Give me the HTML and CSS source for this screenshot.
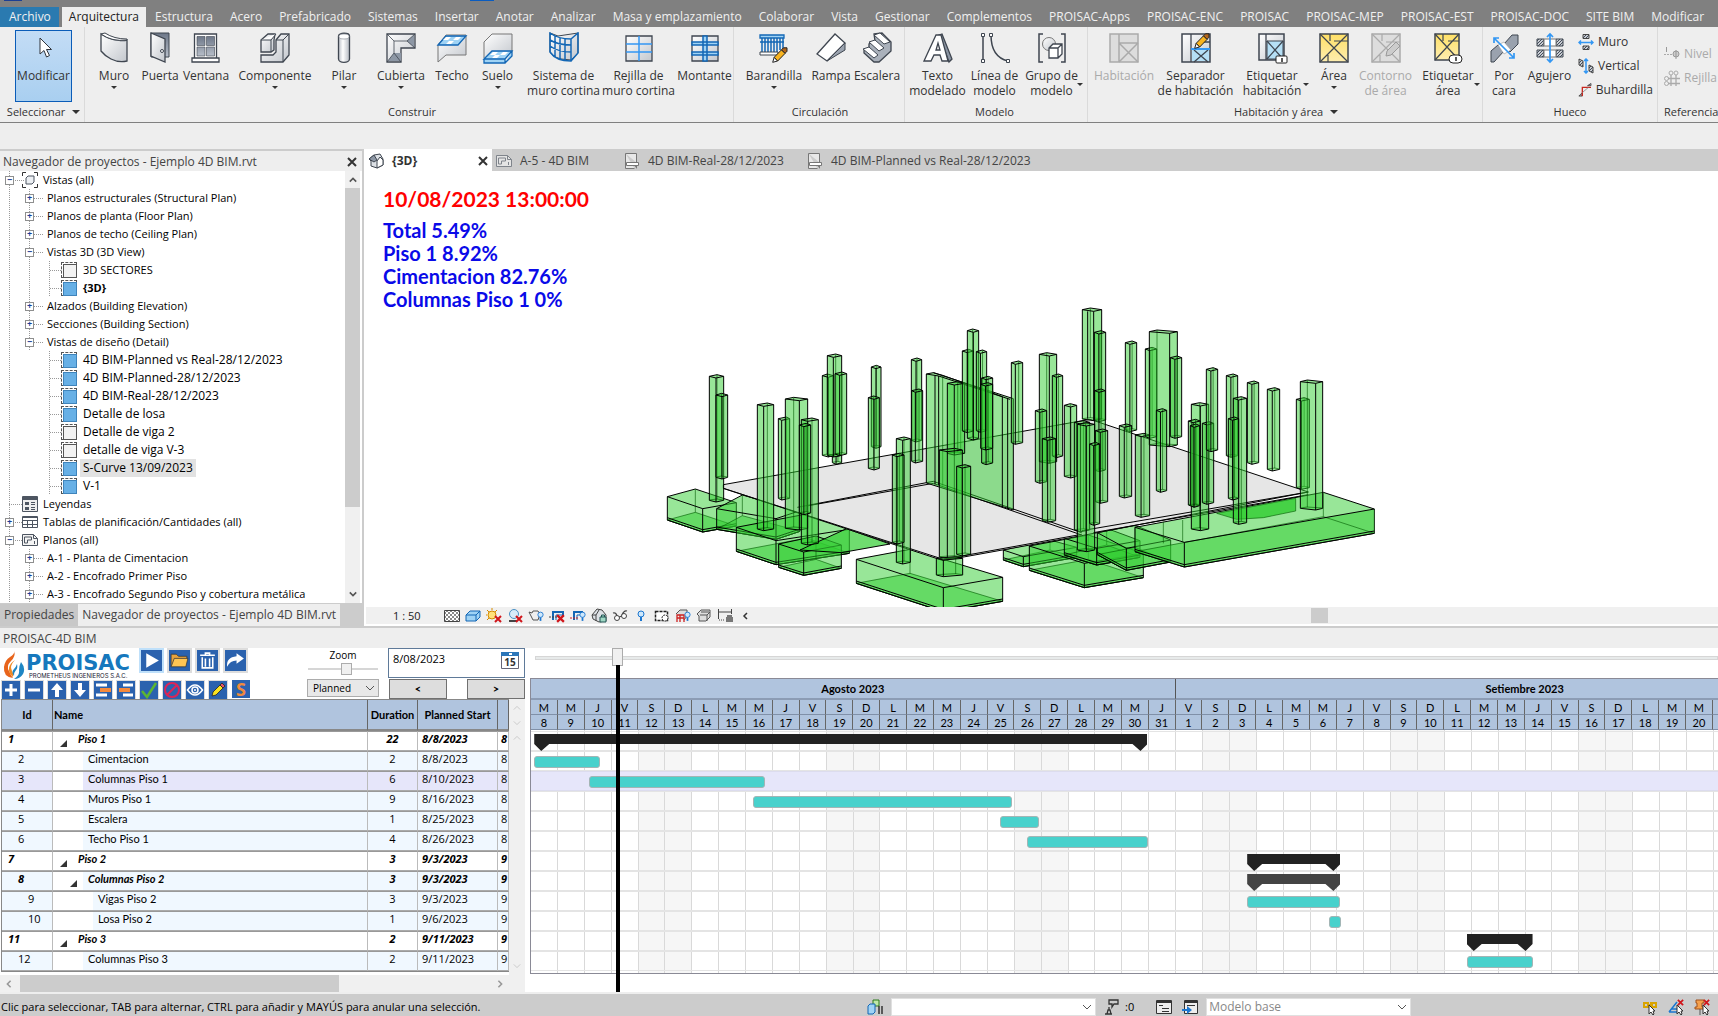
FILE: index.html
```html
<!DOCTYPE html>
<html lang="es">
<head>
<meta charset="utf-8">
<title>Ejemplo 4D BIM.rvt</title>
<link rel="stylesheet" href="styles.css">
</head>
<body>
<svg class="defs" aria-hidden="true">
  <defs>
    <linearGradient id="metal" x1="0" y1="0" x2="1" y2="1"><stop offset="0" stop-color="#fff"/><stop offset="1" stop-color="#c3c7cd"/></linearGradient>
    <linearGradient id="steel" x1="0" y1="0" x2="1" y2="0"><stop offset="0" stop-color="#b9bec6"/><stop offset=".4" stop-color="#fff"/><stop offset="1" stop-color="#b4b9c1"/></linearGradient>
    <linearGradient id="dark" x1="0" y1="0" x2="0" y2="1"><stop offset="0" stop-color="#6d7788"/><stop offset="1" stop-color="#b7bec9"/></linearGradient>
    <linearGradient id="gold" x1="0" y1="0" x2="0" y2="1"><stop offset="0" stop-color="#ffe066"/><stop offset="1" stop-color="#fdedb0"/></linearGradient>
    <pattern id="hatch" width="3" height="3" patternUnits="userSpaceOnUse"><path fill="#c8ccd2" d="M0 0h3v3H0z"/><path stroke="#434c5a" d="M0 3 3 0"/></pattern>
    <pattern id="check" width="4" height="4" patternUnits="userSpaceOnUse"><path fill="#fff" d="M0 0h4v4H0z"/><path fill="#888" d="M0 0h2v2H0zM2 2h2v2H2z"/></pattern>
    <symbol id="cross" viewBox="0 0 10 10"><path stroke="#333" stroke-width="2" d="m1 1 8 8M9 1 1 9"/></symbol>
    <symbol id="sheet" viewBox="0 0 16 16"><path fill="#f4f4f4" stroke="#4d5561" d="M.5 2.500h11l4 4v7h-15z"/><path fill="none" stroke="#4d5561" d="M2.500 11v-6h7v3h-4v3zM11.500 2.500v4h4M12.500 9v3"/></symbol>
    <symbol id="draft" viewBox="0 0 16 16"><path fill="#e8e8e8" stroke="#777" d="M1.500.5h11v9M1.500.5v15h9"/><path fill="#fff" stroke="#777" d="M2.500 9.500h12v3h-12z"/><path fill="#777" d="M10 12h3v4z"/></symbol>
    <symbol id="pencil" viewBox="0 0 16 16"><path fill="#fff" stroke="#222" d="m.7 15.300 1.500-5L5.700 14z"/><path fill="#f9b41f" stroke="#222" d="m2.200 10.300 7.300-7.500 3.600 3.600L5.700 14z"/><path fill="#b3661c" stroke="#222" d="m9.500 2.800 2-2h3.500v3.500l-2 2z"/></symbol>
    <symbol id="bulb" viewBox="0 0 8 12"><circle cx="4" cy="4" r="3" fill="#cfe8fb" stroke="#1b76d0"/><path stroke="#1b76d0" stroke-width="2" d="M4 7v4"/></symbol>
    <symbol id="redx" viewBox="0 0 8 8"><path stroke="#d0161b" stroke-width="2" d="m1 1 6 6M7 1 1 7"/></symbol>
  </defs>
</svg>

<header>
  <div class="titlebar"><i class="app"></i><i class="mark"></i></div>
  <nav class="tabs">
    <a class="file" href="#">Archivo</a><a class="on" href="#">Arquitectura</a><a href="#">Estructura</a><a href="#">Acero</a><a href="#">Prefabricado</a><a href="#">Sistemas</a><a href="#">Insertar</a><a href="#">Anotar</a><a href="#">Analizar</a><a href="#">Masa y emplazamiento</a><a href="#">Colaborar</a><a href="#">Vista</a><a href="#">Gestionar</a><a href="#">Complementos</a><a href="#">PROISAC-Apps</a><a href="#">PROISAC-ENC</a><a href="#">PROISAC</a><a href="#">PROISAC-MEP</a><a href="#">PROISAC-EST</a><a href="#">PROISAC-DOC</a><a href="#">SITE BIM</a><a href="#">Modificar</a>
  </nav>
  <div class="ribbon">
    <section class="group select">
      <div class="tools"><button class="tool m active"><svg viewBox="0 0 32 32"><path fill="#fff" stroke="#30343c" d="m12 6 0 16 4-3.500 2.500 6.500 3-1.500-3-6h5z"/></svg>Modificar</button></div>
      <h2>Seleccionar <i class="caret big"></i></h2>
    </section>
    <section class="group build">
      <div class="tools">
        <button class="tool s"><svg viewBox="0 0 32 32"><path fill="url(#metal)" stroke="#3f4650" stroke-width="1.300" d="M3 2q9 6 17 6 5 1 9 0v21q-8 2-16-2Q7 24 3 19z"/><path fill="#fff" stroke="#3f4650" d="m3 2 4-1q9 6 22 6v1Q14 10 3 2z"/></svg>Muro<i class="caret"></i></button>
        <button class="tool s"><svg viewBox="0 0 32 32"><path fill="url(#dark)" stroke="#3f4650" d="M7 1h18v24H7z"/><path fill="url(#metal)" stroke="#3f4650" stroke-width="1.300" d="m7 1 14 6v23L7 24z"/><circle cx="18" cy="19" r="1.500" fill="#fff" stroke="#3f4650"/></svg>Puerta</button>
        <button class="tool s"><svg viewBox="0 0 32 32"><path fill="#fff" stroke="#3f4650" stroke-width="1.300" d="M4.500 2h22v24h-22zM2 26h27v4H2z"/><path fill="url(#dark)" stroke="#3f4650" stroke-width=".6" d="M7 4.500h8v9H7zM16.500 4.500h8v9h-8zM7 15h8v9H7zM16.500 15h8v9h-8z"/></svg>Ventana</button>
        <button class="tool xxl"><svg viewBox="0 0 32 32"><path fill="url(#metal)" stroke="#3f4650" stroke-width="1.300" d="M2 8 9 2h7l-1 6v10l-3 2H2z"/><path fill="#fff" stroke="#3f4650" d="M2 8h10l5-6M12 8v12"/><path fill="url(#metal)" stroke="#3f4650" stroke-width="1.300" d="m17 8 5-6h8v21l-6 7H2v-7h12l3-3z"/><path fill="none" stroke="#3f4650" d="M17 8h7l6-6M24 8v22"/></svg>Componente<i class="caret"></i></button>
        <button class="tool s"><svg viewBox="0 0 32 32"><path fill="url(#steel)" stroke="#3f4650" stroke-width="1.300" d="M10.500 4a5 2.500 0 0 1 11 0v23a5 3 0 0 1-11 0z"/><ellipse cx="16" cy="4.500" rx="5" ry="2.500" fill="#fff" stroke="#8b919a" stroke-width=".7"/></svg>Pilar<i class="caret"></i></button>
        <button class="tool l"><svg viewBox="0 0 32 32"><path fill="url(#metal)" stroke="#3f4650" stroke-width="1.300" d="M2 2h28v14H16v14H2z"/><path fill="#8d97a5" d="m3 29 6-8h7v8zM22 9l7-6v12z"/><path fill="none" stroke="#3f4650" stroke-width=".8" d="m2 2 7 7v12l-7 9M9 9h13l8-7M9 21l7 9M22 9l8 7"/></svg>Cubierta<i class="caret"></i></button>
        <button class="tool xs"><svg viewBox="0 0 32 32"><path fill="url(#metal)" stroke="#777" d="M2 30V13l8-10h20v20H10z"/><path fill="#9fd3f5" stroke="#1367b5" stroke-width="1.300" d="M2 13 10 4h20l-8 9z"/><path fill="#fff" d="m10 5-3 3h5l3-3zM20 5l-3 3h5l3-3zM13 9l-3 3h5l3-3z"/></svg>Techo</button>
        <button class="tool m"><svg viewBox="0 0 32 32"><path fill="url(#metal)" stroke="#777" d="M2 26V10l8-8h20v18"/><path fill="#9fd3f5" stroke="#1367b5" stroke-width="1.300" d="m2 27 8-8h20l-7 8zM2 27v4h21v-4M23 31l7-7v-5"/><path fill="#fff" d="m11 20-3 3h5l3-3zM21 20l-3 3h5l3-3zM13 23l-3 3h5l3-3z"/></svg>Suelo<i class="caret"></i></button>
        <button class="tool xl"><svg viewBox="0 0 32 32"><path fill="url(#metal)" stroke="#3f4650" d="m2 1 8 3 20-3v20l-7 7-10-1Q5 25 2 20z"/><path fill="none" stroke="#1367b5" stroke-width="1.500" d="M2 1q8 6 21 6v22Q8 29 2 20zM7 4v21M12 6v21M17 7v22M2 8q8 5 21 5M2 14q8 6 21 6M23 7l7-6v20l-7 8"/></svg>Sistema de<br>muro cortina</button>
        <button class="tool xl"><svg viewBox="0 0 32 32"><path fill="url(#metal)" stroke="#3f4650" stroke-width="1.300" d="M3 4h26v25H3z"/><path stroke="#3397f3" stroke-width="1.500" d="M16 4v25M3 12h26M3 20h26"/></svg>Rejilla de<br>muro cortina</button>
        <button class="tool m"><svg viewBox="0 0 32 32"><path fill="url(#metal)" stroke="#3f4650" stroke-width="1.300" d="M3 4h26v25H3z"/><path fill="#9fd3f5" stroke="#1367b5" stroke-width="1.500" d="M3 10h26v3H3zM3 20h26v3H3zM14 4h4v25h-4z"/></svg>Montante</button>
      </div>
      <h2>Construir</h2>
    </section>
    <section class="group circ">
      <div class="tools">
        <button class="tool l"><svg viewBox="0 0 32 32"><path fill="#9fd3f5" stroke="#1367b5" stroke-width="1.300" d="M2 3h24v3H2z"/><path stroke="#1367b5" stroke-width="1.500" d="M4 6v17M7 6v14M10 6v14M13 6v14M16 6v14M19 6v14M22 6v12M25 6v12M2 10h24"/><path fill="#fff" stroke="#3f4650" d="M2 20h18v3H2z"/><use href="#pencil" x="14" y="15" width="16" height="16"/></svg>Barandilla<i class="caret"></i></button>
        <button class="tool s"><svg viewBox="0 0 32 32"><path fill="#fff" stroke="#3f4650" stroke-width="1.300" d="M2 22 20 2l10 9-18 18z"/><path fill="#9ba3af" stroke="#3f4650" d="M30 11v7L12 29z"/></svg>Rampa</button>
        <button class="tool s"><svg viewBox="0 0 32 32"><path fill="#aab1bb" stroke="#3f4650" stroke-width="1.300" d="m13 2 8-1 9 9v9L18 30h-5l-10-9v-3l5-2v-4l6-3z"/><path fill="#fff" stroke="#3f4650" d="m13 3 6-2 10 9-6 2zM8 10l6-2 9 8-5 3zM2 17l6-2 9 8-4 3z"/></svg>Escalera</button>
      </div>
      <h2>Circulación</h2>
    </section>
    <section class="group model">
      <div class="tools">
        <button class="tool m"><svg viewBox="0 0 32 32"><path fill="#8c96a4" stroke="#3f4650" stroke-width="1.300" d="m17 3 3-1 10 25-3 3z"/><path fill="#fff" stroke="#3f4650" stroke-width="1.300" fill-rule="evenodd" d="m2 29 12-26h5l7 26h-6l-2-6h-6l-3 6zm12-11h4l-2-7z"/></svg>Texto<br>modelado</button>
        <button class="tool m"><svg viewBox="0 0 32 32"><path fill="none" stroke="#3f4650" stroke-width="1.500" d="M4 3v26M12 3q0 22 17 26"/><path fill="#fff" stroke="#3f4650" d="M2.500 1.500h3v3h-3zM2.500 27.500h3v3h-3zM10.500 1.500h3v3h-3zM27.500 27.500h3v3h-3z"/></svg>Línea de<br>modelo</button>
        <button class="tool m side"><svg viewBox="0 0 32 32"><path fill="none" stroke="#3f4650" stroke-width="1.500" d="M7 2H3v28h4M25 2h4v28h-4"/><circle cx="13" cy="12" r="6.500" fill="url(#metal)" stroke="#777"/><path fill="#fff" stroke="#3f4650" stroke-width="1.300" d="m13 16 4-4h9v10l-4 4h-9zM13 16h9v10M22 16l4-4"/></svg>Grupo de<br>modelo<i class="caret"></i></button>
      </div>
      <h2>Modelo</h2>
    </section>
    <section class="group room">
      <div class="tools">
        <button class="tool l" disabled><svg viewBox="0 0 32 32"><path fill="#ddd" stroke="#aaa" stroke-width="1.500" d="M2 2h28v28H2z"/><path fill="none" stroke="#aaa" stroke-width="1.500" d="M11 30V2M11 11h19M11 11l19 19M30 11 11 30"/></svg>Habitación</button>
        <button class="tool xl"><svg viewBox="0 0 32 32"><path fill="url(#metal)" stroke="#3f4650" stroke-width="1.500" d="M2 2h28v28H2z"/><path fill="#b5dff5" d="M12 18h17v11H12z"/><path fill="none" stroke="#3f4650" stroke-width="1.300" d="M11 2v28M14 18l14 12M28 18 14 30M20 10h10"/><path stroke="#3397f3" stroke-width="2" d="M11 17h19"/><use href="#pencil" x="14" y="1" width="16" height="16"/></svg>Separador<br>de habitación</button>
        <button class="tool w side"><svg viewBox="0 0 32 32"><path fill="url(#metal)" stroke="#3f4650" stroke-width="1.500" d="M3 2h25v26H3z"/><path fill="#b5dff5" stroke="#3f4650" d="M11 9h16v18H11z"/><path stroke="#3f4650" stroke-width="1.300" d="M10 2v26M11 9l16 18M27 9 11 27"/><rect x="20" y="24" width="11" height="7" rx="1" fill="#fff" stroke="#222"/><path stroke="#222" stroke-width="1.500" d="M26 26v4"/></svg>Etiquetar<br>habitación<i class="caret"></i></button>
        <button class="tool s"><svg viewBox="0 0 32 32"><path fill="url(#gold)" stroke="#3f4650" stroke-width="1.500" d="M2 2h28v28H2z"/><path fill="none" stroke="#3f4650" stroke-width="1.200" d="m2 2 28 28M30 2 2 30M12 2v7M16 9h14M10 30v-7"/></svg>Área<i class="caret"></i></button>
        <button class="tool m" disabled><svg viewBox="0 0 32 32"><path fill="#ddd" stroke="#aaa" stroke-width="1.500" d="M2 2h28v28H2z"/><path fill="none" stroke="#aaa" stroke-width="1.200" d="m2 2 28 28M30 2 2 30M12 2v7M16 10h14M10 30v-7"/><path fill="#ccc" stroke="#999" d="m16 24 1-5 9-9 4 4-9 9z"/></svg>Contorno<br>de área</button>
        <button class="tool l side"><svg viewBox="0 0 32 32"><path fill="url(#gold)" stroke="#3f4650" stroke-width="1.500" d="M3 2h24v26H3z"/><path fill="none" stroke="#3f4650" stroke-width="1.200" d="m3 2 24 26M27 2 3 28M11 2v7M16 9h11"/><rect x="17" y="23" width="13" height="8" rx="4" fill="#fff" stroke="#222"/><path stroke="#222" stroke-width="1.500" d="M24 25v4"/></svg>Etiquetar<br>área<i class="caret"></i></button>
      </div>
      <h2>Habitación y área <i class="caret big"></i></h2>
    </section>
    <section class="group hole">
      <div class="tools">
        <button class="tool xs"><svg viewBox="0 0 32 32"><path fill="#9aa2ae" stroke="#3f4650" d="M3 30V19l7-6 6 6L6 30zM16 12l8-9h6v9l-8 8z"/><path fill="#fff" stroke="#999" stroke-width=".6" d="m10 13 6-3 7 8-7 4z"/><path fill="none" stroke="#3397f3" stroke-width="1.700" d="m6 6 20 20M6 11V6h5M26 21v5h-5"/></svg>Por<br>cara</button>
        <button class="tool m"><svg viewBox="0 0 32 32"><path fill="url(#hatch)" stroke="#3f4650" d="M3 7h7v7H3zM22 7h7v7h-7zM3 18h7v7H3zM22 18h7v7h-7z"/><path fill="#fff" stroke="#777" d="M10 7h12v7H10zM10 18h12v7H10z"/><path fill="none" stroke="#3397f3" stroke-width="1.700" d="M16 3v26M13 5l3-3 3 3M13 27l3 3 3-3"/></svg>Agujero</button>
        <div class="stack">
          <button><svg viewBox="0 0 16 16"><path fill="url(#hatch)" stroke="#444" d="M5 .5h6v4H5zM5 12h6v3.500H5z"/><path fill="none" stroke="#3397f3" stroke-width="1.500" d="M1 8.500h14M3 6.500l-2 2 2 2M13 6.500l2 2-2 2"/></svg>Muro</button>
          <button><svg viewBox="0 0 16 16"><path fill="url(#hatch)" stroke="#444" d="m1 1 4 2v6L1 7zM11 7l4 2v6l-4-2z"/><path fill="none" stroke="#3397f3" stroke-width="1.500" d="M8 1v14M6 3l2-2 2 2M6 13l2 2 2-2"/></svg>Vertical</button>
          <button><svg viewBox="0 0 16 16"><path fill="url(#hatch)" stroke="#444" d="m11 3 4-2.500V3zM1 15l4-4v4z"/><path fill="none" stroke="#c8261d" stroke-width="1.500" d="M5 15V5h10"/><path stroke="#888" d="m5 11 7-6"/></svg>Buhardilla</button>
        </div>
      </div>
      <h2>Hueco</h2>
    </section>
    <section class="group ref">
      <div class="tools"><div class="stack two">
        <button disabled><svg viewBox="0 0 16 16"><path fill="none" stroke="#aaa" stroke-dasharray="2 1" d="M0 8.500h8"/><circle cx="12" cy="8" r="3" fill="#ccc" stroke="#999"/><path stroke="#999" d="M12 4v9M2.500 1v5"/></svg>Nivel</button>
        <button disabled><svg viewBox="0 0 16 16"><path fill="none" stroke="#aaa" stroke-width="1.300" d="M7 5v11M12 5v11M4 8.500h12M4 13.500h12"/><g fill="none" stroke="#aaa"><circle cx="7" cy="3" r="2"/><circle cx="12" cy="3" r="2"/><circle cx="2.500" cy="8.500" r="2"/><circle cx="2.500" cy="13.500" r="2"/></g></svg>Rejilla</button>
      </div></div>
      <h2>Referencia</h2>
    </section>
  </div>
  <div class="options"></div>
</header>

<main class="workspace">
  <aside class="browser">
    <div class="pane-title"><span>Navegador de proyectos - Ejemplo 4D BIM.rvt</span><button class="close" aria-label="Cerrar"><svg viewBox="0 0 10 10"><use href="#cross"/></svg></button></div>
    <div class="tree-wrap">
      <ul class="tree">
        <li class="n0"><button class="box">−</button><svg viewBox="0 0 16 16"><path fill="none" stroke="#333" d="M4 .5H.500V4M12 .5h3.500V4M4 15.500H.500V12M12 15.500h3.500V12"/><path fill="#eceff3" stroke="#4d5561" d="m4 6 2-2h6v6l-2 2H4z"/></svg>Vistas (all)</li>
        <li class="n1"><button class="box">+</button>Planos estructurales (Structural Plan)</li>
        <li class="n1"><button class="box">+</button>Planos de planta (Floor Plan)</li>
        <li class="n1"><button class="box">+</button>Planos de techo (Ceiling Plan)</li>
        <li class="n1"><button class="box">−</button>Vistas 3D (3D View)</li>
        <li class="n2"><i class="view off"></i><span>3D SECTORES</span></li>
        <li class="n2"><i class="view"></i><b>{3D}</b></li>
        <li class="n1"><button class="box">+</button>Alzados (Building Elevation)</li>
        <li class="n1"><button class="box">+</button>Secciones (Building Section)</li>
        <li class="n1"><button class="box">−</button>Vistas de diseño (Detail)</li>
        <li class="n2 end"><i class="view"></i><span>4D BIM-Planned vs Real-28/12/2023</span></li>
        <li class="n2 end"><i class="view"></i><span>4D BIM-Planned-28/12/2023</span></li>
        <li class="n2 end"><i class="view"></i><span>4D BIM-Real-28/12/2023</span></li>
        <li class="n2 end"><i class="view"></i><span>Detalle de losa</span></li>
        <li class="n2 end"><i class="view off"></i><span>Detalle de viga 2</span></li>
        <li class="n2 end"><i class="view off"></i><span>detalle de viga V-3</span></li>
        <li class="n2 end"><i class="view"></i><span class="picked">S-Curve 13/09/2023</span></li>
        <li class="n2 end"><i class="view"></i><span>V-1</span></li>
        <li class="n0"><i class="nobox"></i><svg viewBox="0 0 16 16"><path fill="#eee" stroke="#4d5561" d="M.5.5h15v15H.500z"/><path fill="#4d5561" d="M1 1h14v3H1zM3 6h4v3H3zM3 11h4v3H3zM9 6h4v1H9zM9 8h4v1H9zM9 11h4v1H9zM9 13h4v1H9z"/></svg>Leyendas</li>
        <li class="n0"><button class="box">+</button><svg viewBox="0 0 16 16"><path fill="#fff" stroke="#4d5561" d="M.5 2.500h15v11H.500z"/><path fill="none" stroke="#4d5561" d="M.5 3.500h15M.5 6.500h15M.5 10.500h15M5.500 6v7M10.500 6v7"/></svg>Tablas de planificación/Cantidades (all)</li>
        <li class="n0"><button class="box">−</button><svg viewBox="0 0 16 16"><use href="#sheet"/></svg>Planos (all)</li>
        <li class="n1"><button class="box">+</button>A-1 - Planta de Cimentacion</li>
        <li class="n1"><button class="box">+</button>A-2 - Encofrado Primer Piso</li>
        <li class="n1"><button class="box">+</button>A-3 - Encofrado Segundo Piso y cobertura metálica</li>
      </ul>
      <div class="vbar"><svg viewBox="0 0 10 6"><path d="m1 5 4-4 4 4"/></svg><i></i><svg viewBox="0 0 10 6"><path d="m1 1 4 4 4-4"/></svg></div>
    </div>
    <div class="pane-tabs"><button>Propiedades</button><button class="on">Navegador de proyectos - Ejemplo 4D BIM.rvt</button></div>
  </aside>

  <section class="viewport">
    <div class="view-tabs">
      <div class="vt on"><svg viewBox="0 0 16 16"><path fill="#dde1e6" stroke="#3f4650" d="m1 6 5-4 6-1 3 5v6l-6 3-6-2V8z"/><path fill="#8d97a5" stroke="#3f4650" d="m1 6 5-4 3 5-3 2z"/><path fill="#fff" stroke="#3f4650" d="M9 15V8l3-4 3 3v5z"/></svg><b>{3D}</b><button class="close" aria-label="Cerrar"><svg viewBox="0 0 10 10"><use href="#cross"/></svg></button></div>
      <div class="vt a5"><svg class="dim" viewBox="0 0 16 16"><use href="#sheet"/></svg>A-5 - 4D BIM</div>
      <div class="vt real"><svg viewBox="0 0 16 16"><use href="#draft"/></svg>4D BIM-Real-28/12/2023</div>
      <div class="vt"><svg viewBox="0 0 16 16"><use href="#draft"/></svg>4D BIM-Planned vs Real-28/12/2023</div>
    </div>
    <div class="canvas">
      <div class="stats"><p class="when">10/08/2023 13:00:00</p><p>Total 5.49%</p><p>Piso 1 8.92%</p><p>Cimentacion 82.76%</p><p>Columnas Piso 1 0%</p></div>
      <svg class="scene" id="scene" viewBox="0 0 2190 951" aria-label="Modelo 3D"></svg>
    </div>
    <div class="viewbar">
      <span>1 : 50</span>
      <div class="vicons">
        <svg viewBox="0 0 16 16"><path fill="url(#check)" stroke="#444" d="M.5 2.500h15v11H.500z"/></svg>
        <svg viewBox="0 0 16 16"><path fill="#9fd3f5" stroke="#1367b5" d="m1 7 4-4h10v6l-4 4H1zM1 7h10v6M11 7l4-4"/></svg>
        <svg viewBox="0 0 16 16"><circle cx="6" cy="7" r="4" fill="#ffe27a" stroke="#d48a00"/><path stroke="#d48a00" d="M6 0v2M0 7h1M1 2l2 2M11 2 9 4M1 12l2-2"/><use href="#redx" x="8" y="7" width="8" height="8"/></svg>
        <svg viewBox="0 0 16 16"><circle cx="7" cy="6" r="4.500" fill="#d8ecfa" stroke="#4a90c4"/><path stroke="#444" stroke-width="2" d="M2 13h8"/><use href="#redx" x="8" y="7" width="8" height="8"/></svg>
        <svg viewBox="0 0 16 16"><path fill="#eee" stroke="#555" d="m1 4 3 1 1-2h5l2 3-2 6H5L3 8z"/><use href="#bulb" x="9" y="3" width="7" height="11"/></svg>
        <svg viewBox="0 0 16 16"><path fill="none" stroke="#1367b5" stroke-width="2" d="M4 12V4h10v5"/><path fill="none" stroke="#1367b5" d="M7 12V7h6"/><path stroke="#444" stroke-dasharray="2 1" d="M0 9h12"/><use href="#redx" x="7" y="6" width="9" height="9"/></svg>
        <svg viewBox="0 0 16 16"><path fill="none" stroke="#1367b5" stroke-width="2" d="M4 12V4h9"/><path fill="none" stroke="#1367b5" d="M7 12V7h3"/><path stroke="#c22" stroke-dasharray="2 1" d="M0 10h9"/><use href="#bulb" x="9" y="3" width="7" height="11"/></svg>
        <svg viewBox="0 0 16 16"><path fill="#dde1e6" stroke="#444" d="m1 7 5-6 5 1 4 5v6l-7 1-6-3z"/><path fill="none" stroke="#444" d="M1 7h4v6M5 7l3-5"/><path fill="#9fd8c4" stroke="#255" d="M9 9h6v5H9zM10.500 9V7h3v2"/></svg>
        <svg viewBox="0 0 16 16"><path fill="none" stroke="#444" stroke-width="1.300" d="M1 5q3-1 4 3M15 3q-3-1-5 4M7 9l3-1"/><circle cx="5" cy="10" r="2.500" fill="#fff" stroke="#444"/><circle cx="12" cy="8" r="2.500" fill="#fff" stroke="#444"/></svg>
        <svg viewBox="0 0 16 16"><use href="#bulb" x="4" y="2" width="8" height="12"/></svg>
        <svg viewBox="0 0 16 16"><path fill="#fff" stroke="#222" stroke-width="1.500" stroke-dasharray="3 1" d="M1.500 3.500h12v9h-12z"/><circle cx="11" cy="10" r="3" fill="#fff" stroke="#222" stroke-dasharray="2 1"/></svg>
        <svg viewBox="0 0 16 16"><path fill="#ddd" stroke="#555" d="M1 6 5 2h7v6l-3 4"/><path fill="none" stroke="#c22" stroke-width="1.300" d="M2 14V7h7v7M5 7v7M2 10h7"/><use href="#bulb" x="9" y="3" width="7" height="11"/></svg>
        <svg viewBox="0 0 16 16"><path fill="#ddd" stroke="#555" d="m1 6 4-4h9v7l-4 4H3V8zM4 7h7v6M11 7l3-3M5 4h8"/></svg>
        <svg viewBox="0 0 16 16"><path stroke="#444" d="M1.500 1v10M14.500 1v5M1 4h14"/><path fill="#777" d="M9 9h7v5H9zM10 7h5v2h-5z"/><path stroke="#444" stroke-dasharray="1 1" d="M2 12h6"/></svg>
        <svg viewBox="0 0 16 16"><path fill="none" stroke="#333" stroke-width="1.500" d="M9 5 6 8l3 3"/></svg>
      </div>
      <div class="hscroll"><i></i></div>
    </div>
  </section>
</main>

<section class="planner">
  <h1>PROISAC-4D BIM</h1>
  <div class="planner-body">
    <div class="tasks">
      <div class="controls">
        <div class="brand">
          <div class="row top">
            <div class="logo"><svg viewBox="0 0 22 28"><path fill="#e8641b" d="M11 0q2 5-3 10T6 20q2 5 4 7Q0 26 1 16 2 9 7 6t4-6z"/><path fill="#f08a24" d="M12 9q-6 6-3 11 2 3 1 6-5-4-4-9t6-8z"/><path fill="#1f86c4" d="M18 11q5 6 2 12-3 5-9 5 6-4 5-9 0-4 2-8z"/><path fill="#1f86c4" d="M14 13q1 4-1 6t-2 6q-3-4 0-7 2-2 3-5z"/></svg><div><strong>PROISAC</strong><small>PROMETHEUS INGENIEROS S.A.C.</small></div></div>
            <div class="bigs">
              <button class="hot" aria-label="Reproducir"><svg viewBox="0 0 20 20"><path fill="#fff" d="m5 3 12 7-12 7z"/></svg></button>
              <button aria-label="Abrir"><svg viewBox="0 0 20 20"><path fill="#e8a33d" stroke="#333" stroke-width=".7" d="M2 16V4h5l2 2h8v3"/><path fill="#ffc553" stroke="#333" stroke-width=".7" d="m2 16 3-8h13l-2 8z"/></svg></button>
              <button aria-label="Borrar"><svg viewBox="0 0 20 20"><path fill="none" stroke="#fff" stroke-width="1.500" d="M3 5h14M8 5V3h4v2M5 7v10h10V7M8 8v8M12 8v8"/></svg></button>
              <button aria-label="Exportar"><svg viewBox="0 0 20 20"><path fill="#fff" d="M2 16q-1-9 9-10V3l7 5-7 5v-3q-6 0-9 6z"/></svg></button>
            </div>
          </div>
          <div class="row smalls">
            <button aria-label="Agregar"><svg viewBox="0 0 18 18"><path stroke="#fff" stroke-width="3" d="M9 3v12M3 9h12"/></svg></button>
            <button aria-label="Quitar"><svg viewBox="0 0 18 18"><path stroke="#fff" stroke-width="3" d="M3 9h12"/></svg></button>
            <button aria-label="Subir"><svg viewBox="0 0 18 18"><path fill="#fff" d="m9 2 6 7h-4v7H7V9H3z"/></svg></button>
            <button aria-label="Bajar"><svg viewBox="0 0 18 18"><path fill="#fff" d="m9 16 6-7h-4V2H7v7H3z"/></svg></button>
            <button aria-label="Aumentar sangría"><svg viewBox="0 0 18 18"><path stroke="#fff" stroke-width="3" d="M2 4h11M2 14h11"/><path stroke="#f58a3c" stroke-width="4" d="M6 9h11"/></svg></button>
            <button aria-label="Reducir sangría"><svg viewBox="0 0 18 18"><path stroke="#fff" stroke-width="3" d="M6 4h10M6 14h10"/><path stroke="#f58a3c" stroke-width="4" d="M2 9h11"/></svg></button>
            <button aria-label="Aceptar"><svg viewBox="0 0 18 18"><path fill="none" stroke="#5cb531" stroke-width="2.500" d="m2 10 5 6 9-14"/></svg></button>
            <button aria-label="Anular"><svg viewBox="0 0 18 18"><path fill="none" stroke="#dc2558" stroke-width="2" d="M4.200 13.800 13.800 4.200M16 9A7 7 0 1 1 2 9a7 7 0 0 1 14 0z"/></svg></button>
            <button aria-label="Ver"><svg viewBox="0 0 18 18"><path fill="none" stroke="#fff" stroke-width="1.500" d="M1.500 9q7.500-10 15 0-7.500 10-15 0z"/><circle cx="9" cy="9" r="3" fill="none" stroke="#fff" stroke-width="1.500"/><circle cx="9" cy="9" r="1" fill="#fff"/></svg></button>
            <button aria-label="Editar"><svg viewBox="0 0 18 18"><path fill="#fbe320" stroke="#222" stroke-width=".8" d="m4 11 7-7 3 3-7 7-4 1z"/><path fill="#e2536b" stroke="#222" stroke-width=".8" d="m11 4 2-2 3 3-2 2z"/></svg></button>
            <button class="curve">S</button>
          </div>
        </div>
        <div class="zoom"><label for="zoom">Zoom</label><input id="zoom" type="range" value="56"><select aria-label="Tipo"><option>Planned</option></select></div>
        <div class="date"><div class="datebox"><input type="text" aria-label="Fecha" value="8/08/2023"><svg viewBox="0 0 18 18"><path fill="#fff" stroke="#667" d="M.5 3.500h17v14H.500z"/><path fill="#2c76b8" d="M0 1h18v4H0z"/><path fill="#fff" d="M8 2h3v2H8z"/><text x="9" y="15" text-anchor="middle">15</text></svg></div>
          <div class="nav"><button>&lt;</button><button>&gt;</button></div></div>
      </div>
      <div class="grid-area">
        <table class="grid">
          <colgroup><col class="c-id"><col><col class="c-dur"><col class="c-start"><col class="c-end"></colgroup>
          <thead><tr><th>Id</th><th class="name">Name</th><th>Duration</th><th>Planned Start</th><th></th></tr></thead>
          <tbody>
            <tr class="sum"><td>1</td><td><i class="tri"></i>Piso 1</td><td>22</td><td>8/8/2023</td><td>8</td></tr>
            <tr class="d2"><td>2</td><td>Cimentacion</td><td>2</td><td>8/8/2023</td><td>8</td></tr>
            <tr class="d2 sel"><td>3</td><td>Columnas Piso 1</td><td>6</td><td>8/10/2023</td><td>8</td></tr>
            <tr class="d2"><td>4</td><td>Muros Piso 1</td><td>9</td><td>8/16/2023</td><td>8</td></tr>
            <tr class="d2"><td>5</td><td>Escalera</td><td>1</td><td>8/25/2023</td><td>8</td></tr>
            <tr class="d2"><td>6</td><td>Techo Piso 1</td><td>4</td><td>8/26/2023</td><td>8</td></tr>
            <tr class="sum"><td>7</td><td><i class="tri"></i>Piso 2</td><td>3</td><td>9/3/2023</td><td>9</td></tr>
            <tr class="d2 sub"><td>8</td><td><i class="tri"></i>Columnas Piso 2</td><td>3</td><td>9/3/2023</td><td>9</td></tr>
            <tr class="d3"><td>9</td><td>Vigas Piso 2</td><td>3</td><td>9/3/2023</td><td>9</td></tr>
            <tr class="d3"><td>10</td><td>Losa Piso 2</td><td>1</td><td>9/6/2023</td><td>9</td></tr>
            <tr class="sum"><td>11</td><td><i class="tri"></i>Piso 3</td><td>2</td><td>9/11/2023</td><td>9</td></tr>
            <tr class="d2"><td>12</td><td>Columnas Piso 3</td><td>2</td><td>9/11/2023</td><td>9</td></tr>
          </tbody>
        </table>
        <div class="vbar faint"><svg viewBox="0 0 10 6"><path d="m1 5 4-4 4 4"/></svg><svg viewBox="0 0 10 6"><path d="m1 1 4 4 4-4"/></svg><svg viewBox="0 0 10 6"><path d="m1 5 4-4 4 4"/></svg><svg class="last" viewBox="0 0 10 6"><path d="m1 1 4 4 4-4"/></svg></div>
      </div>
      <div class="hbar"><svg viewBox="0 0 6 10"><path d="M5 1 1 5l4 4"/></svg><div><i></i></div><svg viewBox="0 0 6 10"><path d="m1 1 4 4-4 4"/></svg></div>
    </div>

    <div class="timeline">
      <input class="scrub" type="range" aria-label="Fecha de simulación" min="0" max="1000" value="65">
      <div class="gantt">
        <table class="cal">
          <thead>
            <tr class="months"><th colspan="24">Agosto 2023</th><th colspan="26">Setiembre 2023</th></tr>
            <tr><td>M</td><td>M</td><td>J</td><td>V</td><td>S</td><td>D</td><td>L</td><td>M</td><td>M</td><td>J</td><td>V</td><td>S</td><td>D</td><td>L</td><td>M</td><td>M</td><td>J</td><td>V</td><td>S</td><td>D</td><td>L</td><td>M</td><td>M</td><td>J</td><td>V</td><td>S</td><td>D</td><td>L</td><td>M</td><td>M</td><td>J</td><td>V</td><td>S</td><td>D</td><td>L</td><td>M</td><td>M</td><td>J</td><td>V</td><td>S</td><td>D</td><td>L</td><td>M</td><td>M</td><td></td><td></td><td></td><td></td><td></td><td></td></tr>
            <tr><td>8</td><td>9</td><td>10</td><td>11</td><td>12</td><td>13</td><td>14</td><td>15</td><td>16</td><td>17</td><td>18</td><td>19</td><td>20</td><td>21</td><td>22</td><td>23</td><td>24</td><td>25</td><td>26</td><td>27</td><td>28</td><td>29</td><td>30</td><td>31</td><td>1</td><td>2</td><td>3</td><td>4</td><td>5</td><td>6</td><td>7</td><td>8</td><td>9</td><td>10</td><td>11</td><td>12</td><td>13</td><td>14</td><td>15</td><td>16</td><td>17</td><td>18</td><td>19</td><td>20</td><td></td><td></td><td></td><td></td><td></td><td></td></tr>
          </thead>
        </table>
        <div class="rows">
          <div><i class="span" style="--s:.12;--d:22.82"></i></div>
          <div><i class="bar" style="--s:.12;--d:2.45"></i></div>
          <div class="sel"><i class="bar" style="--s:2.14;--d:6.57"></i></div>
          <div><i class="bar" style="--s:8.25;--d:9.64"></i></div>
          <div><i class="bar" style="--s:17.45;--d:1.47"></i></div>
          <div><i class="bar" style="--s:18.46;--d:4.5"></i></div>
          <div><i class="span" style="--s:26.65;--d:3.47"></i></div>
          <div><i class="span soft" style="--s:26.65;--d:3.47"></i></div>
          <div><i class="bar" style="--s:26.65;--d:3.47"></i></div>
          <div><i class="bar" style="--s:29.68;--d:.45"></i></div>
          <div><i class="span" style="--s:34.82;--d:2.45"></i></div>
          <div><i class="bar" style="--s:34.82;--d:2.45"></i></div>
        </div>
      </div>
      <i class="playhead"></i>
    </div>
  </div>
</section>

<footer class="status">
  <span class="hint">Clic para seleccionar, TAB para alternar, CTRL para añadir y MAYÚS para anular una selección.</span>
  <svg viewBox="0 0 16 16"><path fill="#bfe7a8" stroke="#2c7a1c" d="M6 1h6v6H6z"/><path fill="#9fd3f5" stroke="#1367b5" d="m1 7 2-2h5v8l-2 2H1z"/><path stroke="#333" stroke-width="1.500" d="M12 7v8M15 7v8"/></svg>
  <select class="combo" aria-label="Subproyecto"><option></option></select>
  <svg viewBox="0 0 16 16"><path fill="none" stroke="#333" stroke-width="1.300" d="M5 1h9v4h-4l-2 3V5H5zM1 15h7M3 15l1-4h2l1 4M5 8v3"/></svg>
  <span class="count">:0</span>
  <svg viewBox="0 0 16 16"><path fill="#eee" stroke="#333" d="M.5 1.500h15v13H.500z"/><path stroke="#333" stroke-width="2" d="M1 3h14"/><path stroke="#333" d="M3 6.500h4M6 9.500h7M6 12.500h7"/></svg>
  <svg viewBox="0 0 16 16"><path fill="#eee" stroke="#333" d="M2.500 1.500h13v13h-13z"/><path stroke="#333" stroke-width="2" d="M2 3h13"/><path stroke="#333" d="M5 6.500h8"/><path fill="#1b76d0" d="M0 10h5V7l5 4-5 4v-3H0z"/></svg>
  <select class="combo base" aria-label="Opción de diseño"><option>Modelo base</option></select>
  <div class="picks">
    <svg viewBox="0 0 16 16"><path fill="none" stroke="#d9a400" stroke-width="2" d="M2 4h4v4H2zM9 4h5v4H9zM5 6h6"/><path fill="#fff" stroke="#333" d="M7 6v9l2-2 2 3 1-1-1-3h2z"/></svg>
    <svg viewBox="0 0 16 16"><path fill="none" stroke="#1b76d0" stroke-width="1.500" d="m1 13 8-10M1 13h8M3 10h7"/><path fill="#fff" stroke="#333" d="M9 6v9l2-2 2 3 1-1-1-3h2z"/><use href="#redx" x="9" y="0" width="7" height="7"/></svg>
    <svg viewBox="0 0 16 16"><path fill="#f5a04c" stroke="#a1501a" d="M2 1h8v3H8v4h3v2H1V8h2V4H2z"/><path stroke="#555" d="M6 10v6"/><path fill="#fff" stroke="#333" d="M9 6v9l2-2 2 3 1-1-1-3h2z"/><use href="#redx" x="9" y="0" width="7" height="7"/></svg>
  </div>
</footer>
<script src="scene.js"></script>
</body>
</html>
```
FILE: styles.css
```css
* { box-sizing: border-box; }
body { margin: 0; min-height: 100vh; display: flex; flex-direction: column; background: #eee; color: #1a1a1a; font: 11px/14px "Open Sans", "Noto Sans", sans-serif; overflow-x: hidden; }
button, input, select { font: inherit; color: inherit; margin: 0; padding: 0; border: 0; background: none; border-radius: 0; }
h1, h2, p, ul { margin: 0; padding: 0; font: inherit; }
ul { list-style: none; }
table { border-collapse: separate; border-spacing: 0; table-layout: fixed; }
.defs { position: absolute; width: 0; height: 0; }

.titlebar { height: 7px; background: #808080; display: flex; }
.titlebar .app { width: 18px; height: 1px; margin-left: 4px; background: #1b3f94; }
.titlebar .mark { width: 24px; height: 1px; margin-left: 448px; background: #0a5cc0; }
.tabs { display: flex; height: 20px; background: #808080; overflow: hidden; }
.tabs a { flex: none; padding: 0 8px 0 9px; line-height: 19px; font-size: 12px; color: #f0f0f0; text-decoration: none; white-space: nowrap; }
.tabs .file { background: #2a7ab0; margin-right: 3px; }
.tabs .on { background: #eee; color: #222; padding: 0 7px; }

.ribbon { display: flex; height: 96px; border-bottom: 1px solid #808080; overflow: hidden; }
.group { flex: none; display: flex; flex-direction: column; padding: 3px 0 1px; border-right: 1px solid #dadada; font-size: 12px; color: #333; }
.group h2 { margin-top: auto; text-align: center; line-height: 18px; white-space: nowrap; font-size: 11px; }
.select { width: 85px; padding-left: 15px; }
.select h2 { margin-left: -12px; }
.build { padding-left: 6px; }
.circ { padding-left: 6px; padding-right: 4px; }
.model { padding-left: 4px; padding-right: 7px; }
.room { padding-left: 2px; }
.hole { padding-left: 4px; padding-right: 4px; }
.ref { padding-left: 6px; border: 0; }
.ref h2 { text-align: left; }
.tools { display: flex; height: 72px; }
.tool { position: relative; height: 72px; display: flex; flex-direction: column; align-items: center; padding-top: 2px; line-height: 15px; white-space: nowrap; color: #333; text-align: center; }
.tool svg { width: 32px; height: 32px; flex: none; margin-bottom: 4px; }
.tool.xs { width: 34px; } .tool.s { width: 46px; } .tool.m { width: 57px; } .tool.l { width: 68px; } .tool.xl { width: 75px; } .tool.w { width: 78px; } .tool.xxl { width: 92px; }
.tool.active { background: linear-gradient(#c3dcf5, #a9cff0); border: 1px solid #0a5cb8; padding-top: 1px; }
.tool:disabled, .stack button:disabled { color: #aaa; }
.caret { display: inline-block; width: 0; height: 0; border: 3px solid transparent; border-top-color: #333; border-bottom: 0; margin-top: 3px; }
.caret.big { border-width: 4px; border-bottom: 0; margin: 0 0 2px 4px; }
.side .caret { position: absolute; right: 2px; top: 53px; margin: 0; }
.model .side .caret { right: -3px; }
.stack { display: flex; flex-direction: column; }
.stack button { display: flex; align-items: center; gap: 4px; height: 24px; white-space: nowrap; }
.stack svg { width: 16px; height: 16px; }
.stack.two { padding-top: 12px; }
.hole .stack { width: 75px; }
.options { height: 26px; }

.workspace { display: flex; border-bottom: 2px solid #ccc; }
.browser { flex: none; width: 364px; border-right: 2px solid #ccc; background: #eee; display: flex; flex-direction: column; font-size: 12px; }
.pane-title { display: flex; justify-content: space-between; align-items: center; height: 22px; padding: 2px 3px 0 3px; border-top: 2px solid #ccc; color: #444; }
.close { display: flex; padding: 2px; }
.close svg { width: 10px; height: 10px; }
.tree-wrap { display: flex; padding: 0 1px; background: #fff; font-size: 11px; }
.tree { flex: 1; min-width: 0; color: #000; }
.tree li { display: flex; align-items: center; height: 18px; white-space: nowrap; background-repeat: no-repeat; --dot: repeating-linear-gradient(#999 0 1px, transparent 1px 2px); --dash: repeating-linear-gradient(90deg, #999 0 1px, transparent 1px 2px); }
.tree svg { width: 16px; height: 16px; margin-right: 5px; flex: none; }
.n0 { padding-left: 4px; background-image: var(--dot), var(--dash); background-size: 1px 100%, 16px 1px; background-position: 8px 0, 8px 9px; }
.n1 { padding-left: 24px; background-image: var(--dot), var(--dot), var(--dash); background-size: 1px 100%, 1px 100%, 14px 1px; background-position: 8px 0, 28px 0, 29px 9px; }
.n2 { padding-left: 60px; background-image: var(--dot), var(--dot), var(--dot), var(--dash); background-size: 1px 100%, 1px 100%, 1px 100%, 11px 1px; background-position: 8px 0, 28px 0, 48px 0, 49px 9px; }
.n2.end { background-size: 1px 100%, 0 0, 1px 100%, 11px 1px; font-size: 12px; }
.box { width: 9px; height: 9px; border: 1px solid #8e8f8f; background: #fff; color: #1b3f94; font-size: 9px; font-weight: bold; line-height: 6px; text-align: center; flex: none; }
.n0 .box, .nobox { margin-right: 8px; }
.nobox { width: 9px; }
.n1 .box { margin-right: 13px; }
.view { width: 16px; height: 16px; border: 1px dashed #555; padding: 1px; margin-right: 3px; flex: none; }
.view::before { content: ""; display: block; width: 12px; height: 12px; background: #67b0e6; border: 1px solid #3f84bb; }
.view.off::before { background: #f2f2f2; border-color: #555; }
.n2 span, .n2 b { padding: 0 3px; line-height: 18px; }
.picked { background: #e2e2e2; }
.vbar { flex: none; width: 15px; margin-right: 1px; background: #f0f0f0; display: flex; flex-direction: column; align-items: center; padding: 6px 0; }
.vbar svg, .hbar svg { fill: none; stroke: #555; stroke-width: 2; width: 8px; height: 6px; flex: none; }
.vbar i { width: 100%; height: 319px; margin: 5px 0 auto; background: #ccc; }
.pane-tabs { display: flex; background: #ccc; padding-top: 1px; margin-top: auto; }
.pane-tabs button { height: 22px; padding: 0 4px; color: #444; background: #c8c8c8; white-space: nowrap; }
.pane-tabs .on { background: #eee; }

.viewport { flex: 1; min-width: 0; display: flex; flex-direction: column; background: #fff; }
.view-tabs { display: flex; height: 22px; background: #ccc; font-size: 12px; color: #444; }
.vt { display: flex; align-items: center; gap: 8px; padding: 2px 4px 0; white-space: nowrap; }
.vt svg { width: 16px; height: 16px; }
.vt .close svg { width: 10px; height: 10px; }
.vt.on { width: 128px; background: #fff; color: #333; }
.vt .close { margin-left: auto; margin-right: -2px; }
.vt.a5 { width: 128px; }
.vt.real { width: 183px; }
.dim { opacity: .6; }
.canvas { flex: 1; position: relative; overflow: hidden; }
.stats { padding: 16px 0 0 19px; font: bold 20px/23px Lato, "Open Sans", sans-serif; color: #0a0ae8; }
.stats .when { color: #f00; font-size: 21px; line-height: 24px; margin-bottom: 8px; }
.scene { position: absolute; left: 296px; bottom: 0; width: 730px; height: 317px; }
.viewbar { display: flex; align-items: center; height: 17px; margin: 0 0 2px 2px; background: #f0f0f0; }
.viewbar span { width: 78px; padding-left: 27px; }
.vicons { display: flex; gap: 5px; }
.vicons svg { width: 16px; height: 16px; }
.hscroll { flex: 1; padding-left: 557px; }
.hscroll i { display: block; width: 17px; height: 15px; background: #ccc; }

.planner h1 { height: 20px; line-height: 21px; padding-left: 3px; font-size: 12px; color: #444; }
.planner-body { display: flex; border-bottom: 2px solid #eee; background: #fff; }
.tasks { flex: none; width: 525px; font-family: Lato, "Open Sans", sans-serif; color: #000; }
.controls { display: flex; height: 51px; }
.brand { width: 308px; }
.row { display: flex; }
.row.top { height: 32px; }
.logo { display: flex; width: 139px; padding: 3px 0 0 3px; }
.logo svg { width: 22px; height: 28px; }
.logo div { display: flex; flex-direction: column; padding: 4px 0 0 1px; white-space: nowrap; }
.logo strong { font: bold 21px/17px "DejaVu Sans", sans-serif; color: #1678bd; }
.logo small { font: 6px/8px Inter, sans-serif; color: #223; padding-left: 3px; }
.bigs { display: flex; gap: 3px; }
.bigs button { width: 25px; height: 25px; padding: 2px; background: #ddd; }
.bigs .hot { background: #bfe0fa; }
.bigs svg { display: block; width: 21px; height: 21px; background: #2b62ae; }
.smalls { gap: 3px; padding-left: 1px; }
.smalls button { width: 20px; height: 19px; padding: 0 1px; background: #ddd; }
.smalls svg { display: block; width: 18px; height: 18px; background: #2b62ae; }
.smalls .curve { background: #2b62ae; color: #f08a3c; font: bold 18px/18px "Open Sans", sans-serif; width: 18px; height: 18px; margin-left: 1px; padding: 0; }
.zoom { width: 72px; display: flex; flex-direction: column; align-items: center; }
.zoom label { font: 10px/15px "Open Sans", sans-serif; }
.zoom input { width: 70px; height: 12px; margin-bottom: 4px; }
input[type=range] { appearance: none; }
input[type=range]::-webkit-slider-runnable-track { height: 2px; background: #d6d6d6; }
input[type=range]::-webkit-slider-thumb { appearance: none; width: 11px; height: 12px; margin-top: -5px; background: #f0f0f0; border: 1px solid #acacac; }
select { appearance: none; background-repeat: no-repeat; background-image: url("data:image/svg+xml,%3Csvg xmlns='http://www.w3.org/2000/svg' width='10' height='6'%3E%3Cpath d='m1 1 4 4 4-4' fill='none' stroke='%23555'/%3E%3C/svg%3E"); }
.zoom select { width: 72px; height: 18px; padding-left: 5px; border: 1px solid #acacac; background-color: #e8e8e8; background-position: right 3px top 5px; font: 10px/14px "Open Sans", sans-serif; }
.date { width: 137px; margin-left: 9px; display: flex; flex-direction: column; gap: 1px; }
.datebox { display: flex; height: 30px; border: 1px solid #5f7a99; padding: 2px 5px 0 4px; }
.datebox input { flex: 1; min-width: 0; height: 16px; font: 11px/16px "Open Sans", sans-serif; }
.datebox svg { width: 18px; height: 18px; font: bold 10px "Open Sans", sans-serif; fill: #333; }
.nav { display: flex; justify-content: space-between; padding-left: 1px; }
.nav button { width: 58px; height: 20px; border: 1px solid #707070; background: #ddd; font-weight: bold; }
.grid-area { display: flex; height: 276px; }
.grid { align-self: flex-start; width: 508px; margin-left: 1px; border: 1px solid #888; border-right: 0; font-size: 11px; overflow: hidden; flex: none; }
.c-id { width: 51px; } .c-dur { width: 50px; } .c-start { width: 80px; } .c-end { width: 11px; }
.grid th { height: 31px; padding: 0 1px; background: #b0c4de; border-right: 1px solid #666; border-bottom: 2px solid #888; font-weight: bold; }
.grid th.name { text-align: left; }
.grid td { height: 20px; padding: 0; border-right: 1px solid #bbb; border-top: 1px solid #999; border-bottom: 1px solid #aaa; line-height: 13px; white-space: nowrap; overflow: hidden; background: #f0f8ff; vertical-align: top; }
.grid td:nth-child(n+3), .grid td:first-child { font-family: "Open Sans", sans-serif; }
.grid td:nth-child(3) { text-align: center; }
.grid td:nth-child(n+4) { padding-left: 4px; }
.grid td:nth-child(5) { padding-left: 3px; }
.grid td:first-child { padding-left: 16px; }
.grid td:nth-child(2) { padding-left: 35px; background: linear-gradient(90deg, #fff 30px, #f0f8ff 30px); }
.grid .d3 td:first-child { padding-left: 26px; }
.grid .d3 td:nth-child(2) { padding-left: 45px; background: linear-gradient(90deg, #fff 40px, #f0f8ff 40px); }
.grid .sum, .grid .sub { font-weight: bold; font-style: italic; }
.grid .sum td, .grid .sum td:nth-child(2) { background: #fff; }
.grid .sum td:first-child { padding-left: 6px; }
.grid .sum td:nth-child(2) { padding-left: 7px; }
.grid .sub td:nth-child(2) { padding-left: 17px; }
.grid .sel td { background: #e6e6fa; }
.grid .sel td:nth-child(2) { background: linear-gradient(90deg, #fff 30px, #e6e6fa 30px); }
.tri { display: inline-block; border: solid transparent; border-width: 0 0 7px 7px; border-bottom-color: #333; margin-right: 11px; vertical-align: -4px; }
.faint { width: 16px; margin: 0; gap: 9px; }
.faint svg { stroke: #c2c2c2; stroke-width: 1; }
.faint .last { margin-top: auto; }
.hbar { display: flex; align-items: center; gap: 8px; height: 17px; padding: 0 22px 0 6px; background: #f0f0f0; }
.hbar svg { width: 6px; height: 8px; stroke: #999; }
.hbar div { flex: 1; align-self: stretch; }
.hbar i { display: block; width: 68%; height: 100%; background: #ccc; }

.timeline { flex: 1; min-width: 0; margin-left: 5px; position: relative; font: 11px/14px Lato, "Open Sans", sans-serif; color: #000; overflow: hidden; }
.scrub { display: block; width: 100%; height: 20px; padding-left: 5px; margin-bottom: 10px; }
input.scrub::-webkit-slider-runnable-track { height: 4px; border: 1px solid #d6d6d6; background: #e7eaea; }
input.scrub::-webkit-slider-thumb { height: 18px; margin-top: -9px; }
.gantt { border: solid #8a8a96; border-width: 1px 0 1px 1px; overflow: hidden; }
.cal, .rows { width: 113.2%; }
.cal { background: #b0c4de; text-align: center; }
.cal th { height: 21px; padding: 0; border-right: 1px solid #555; border-bottom: 2px solid #8c9cb4; font-weight: bold; }
.cal td { height: 15px; padding: 0; border-right: 1px solid #666; border-bottom: 1px solid #8090a8; line-height: 13px; }
.rows { padding: 1px 0 2px; background:
  repeating-linear-gradient(90deg, transparent 0 calc(2% - 1px), #d9d9d9 calc(2% - 1px) 2%),
  repeating-linear-gradient(90deg, #fff 0 8%, #f6f6f6 8% 12%, #fff 12% 14%); }
.rows div { position: relative; height: 20px; border-top: 1px solid #e4e4e4; border-bottom: 1px solid #e4e4e4; }
.rows .sel { background: #e6e6fa; border-color: #dcdcee; }
.rows i { position: absolute; left: calc(var(--s) * 2%); width: calc(var(--d) * 2%); }
.bar { top: 4px; height: 12px; border: 1px solid #a3b5b5; border-radius: 3px; background: #48d1cc; }
.span { top: 2px; height: 17px; background: #222; clip-path: polygon(0 0, 100% 0, 100% 10px, calc(100% - 7px) 100%, calc(100% - 15px) 10px, 15px 10px, 7px 100%, 0 10px); }
.span.soft { background: #444; }
.playhead { position: absolute; left: 86px; top: 17px; bottom: 0; width: 4px; background: #000; }

.status { display: flex; align-items: center; height: 22px; margin-top: auto; background: #ccc; padding: 3px 8px 0 1px; font-size: 11px; color: #000; }
.status svg { width: 16px; height: 16px; flex: none; }
.hint { width: 866px; white-space: nowrap; }
.combo { width: 205px; height: 18px; margin: 0 8px; padding-left: 2px; background-color: #fff; background-position: right 3px center; border: 1px solid #e0e0e0; font-size: 12px; line-height: 16px; }
.base { color: #888; }
.count { margin: 0 22px 0 5px; }
.count + svg { margin-right: 10px; }
.picks { margin-left: auto; display: flex; gap: 10px; }
```
FILE: scene.js
```js
// Draws the structural model: footings, slab, wall and columns as translucent solids.
const NS = "http://www.w3.org/2000/svg";
const scene = document.getElementById("scene");

function shape(points, fill, stroke, alpha = 1) {
  const p = document.createElementNS(NS, "path");
  p.setAttribute("d", points);
  p.setAttribute("fill", fill);
  p.setAttribute("fill-opacity", alpha);
  p.setAttribute("stroke", stroke);
  p.setAttribute("stroke-width", 3);
  p.setAttribute("stroke-linejoin", "round");
  scene.appendChild(p);
}
const GREEN = "#32cd32";
const HIDDEN = "rgba(0,90,0,.6)";

// Footing: four top corners (left, back, right, front) extruded down by h.
function footing([l, b, r, f], h) {
  const d = ([x, y]) => `${x} ${y + h}`;
  shape(`M${l}L${b}L${r}L${d(r)}L${d(f)}L${d(l)}z`, GREEN, "#000", .5);
  shape(`M${d(l)}L${d(b)}L${d(r)}L${d(f)}z`, GREEN, HIDDEN, .5);
  shape(`M${b}L${d(b)}`, "none", HIDDEN);
  shape(`M${l}L${f}L${r}M${f}L${d(f)}M${d(l)}L${d(f)}L${d(r)}`, "none", "#000");
  const u = ([x, y]) => `${x} ${y + h - 7}`;
  shape(`M${u(l)}L${u(f)}L${u(r)}`, "none", "#000");
}

// Column: left and right edge, top and bottom, and the x of the near corner.
function column(x1, x2, top, bottom, near = x1 + (x2 - x1) * .4) {
  const back = x1 + x2 - near;
  shape(`M${x1} ${top + 5}L${back} ${top}L${x2} ${top + 5}V${bottom - 5}L${near} ${bottom}L${x1} ${bottom - 5}z`, GREEN, "#000", .5);
  shape(`M${back} ${top}V${bottom - 8}M${x1} ${bottom - 6}L${back} ${bottom - 9}L${x2} ${bottom - 6}`, "none", HIDDEN);
  shape(`M${x1} ${top + 5}L${near} ${top + 10}L${x2} ${top + 5}M${near} ${top + 10}V${bottom}`, "none", "#000");
}

[
  [[[22, 620], [106, 597], [229, 638], [128, 656]], 70],
  [[[170, 656], [247, 615], [420, 662], [348, 686]], 62],
  [[[229, 712], [440, 672], [568, 718], [348, 752]], 72],
  [[[356, 762], [468, 738], [544, 765], [431, 786]], 70],
  [[[589, 808], [750, 778], [1028, 862], [850, 893]], 72],
  [[[1030, 780], [1170, 750], [1250, 772], [1090, 800]], 30],
  [[[1108, 768], [1285, 735], [1450, 790], [1273, 820]], 73],
  [[[1213, 745], [1340, 715], [1440, 752], [1310, 775]], 50],
  [[[1312, 728], [1425, 706], [1532, 750], [1399, 775]], 66]
].forEach(([corners, h]) => footing(corners, h));

// strip footing along the right side
shape("M1425 712 1990 607 2143 657V730L1573 831 1425 785z", GREEN, "#000", .5);
shape("M1425 785 1573 757 2143 657V730L1573 831z", GREEN, "none", .5);
shape("M1425 785 1990 680 2143 730M1990 607V680M1568 690V755M1510 695V760", "none", HIDDEN);
shape("M1425 712 1573 757 2143 657M1573 757V831M1425 785 1573 831 2143 730M1425 778 1573 824 2143 723", "none", "#000");
shape("M420 780 560 716 690 762 544 788z", GREEN, "#000", .7);
shape("M1670 670 1907 625V663L1810 683 1730 688z", GREEN, HIDDEN, .8);

// slab with its edge thickness
shape("M190 584 1290 388 1945 606 1265 737 850 812 190 595z", "#e6e6e6", "#000");
shape("M190 595 850 808 1265 733M1265 722 1945 606M1300 728 1945 614", "none", "#000");
shape("M412 652 820 574 1265 728M440 648 820 580 1265 735", "none", "#000");

// shear wall
shape("M799 252 820 248 1060 326V660L799 579z", GREEN, "#000", .5);
shape("M799 252 836 258 1050 328M820 248 848 256 1027 320M825 256V583M836 258V585M1027 320V652M1043 326V657", "none", "#000");
shape("M848 258V587M902 274V490", "none", HIDDEN);

const left = [
  [148, 191, 254, 636, 168], [168, 203, 310, 567, 186], [292, 341, 339, 722, 311],
  [355, 389, 381, 630, 365], [376, 443, 322, 720, 418], [424, 475, 384, 765, 443],
  [418, 452, 400, 674], [517, 545, 490, 523], [487, 520, 252, 501, 505],
  [502, 545, 192, 501, 520], [525, 560, 246, 497], [634, 663, 226, 475, 648],
  [625, 658, 318, 540, 642], [754, 785, 204, 456, 768], [755, 788, 297, 519, 766],
  [862, 914, 275, 495], [907, 940, 178, 428, 922], [922, 956, 117, 450, 940],
  [949, 980, 180, 427], [965, 998, 259, 524], [962, 998, 278, 480],
  [1054, 1088, 213, 463, 1066], [709, 751, 441, 822, 728], [697, 732, 490, 762],
  [838, 907, 475, 806, 862], [829, 908, 800, 860, 850], [890, 932, 524, 798]
];
const right = [
  [88, 140, 188, 520, 118], [76, 110, 357, 580], [127, 158, 252, 503],
  [97, 137, 441, 697], [163, 200, 341, 564, 182], [217, 275, 54, 392, 251],
  [253, 287, 122, 395], [254, 286, 297, 545],
  [256, 293, 417, 640], [193, 239, 392, 725], [202, 254, 398, 785, 229],
  [239, 269, 457, 706], [346, 380, 153, 425], [328, 365, 402, 624],
  [376, 419, 430, 682], [406, 440, 172, 445], [418, 502, 120, 470, 479],
  [481, 515, 198, 445], [439, 470, 356, 607], [544, 596, 338, 722, 571],
  [535, 571, 388, 650], [541, 569, 402, 652], [577, 611, 395, 643],
  [589, 623, 233, 485], [649, 683, 252, 502], [670, 710, 320, 703],
  [655, 686, 381, 630], [712, 746, 273, 523], [772, 809, 293, 543],
  [859, 898, 323, 598], [871, 938, 270, 660, 917]
];
left.forEach(c => column(...c));
right.forEach(([x1, x2, t, b, n]) => column(x1 + 1050, x2 + 1050, t, b, n && n + 1050));
shape("M1283 64V386", "none", "#000");
```
